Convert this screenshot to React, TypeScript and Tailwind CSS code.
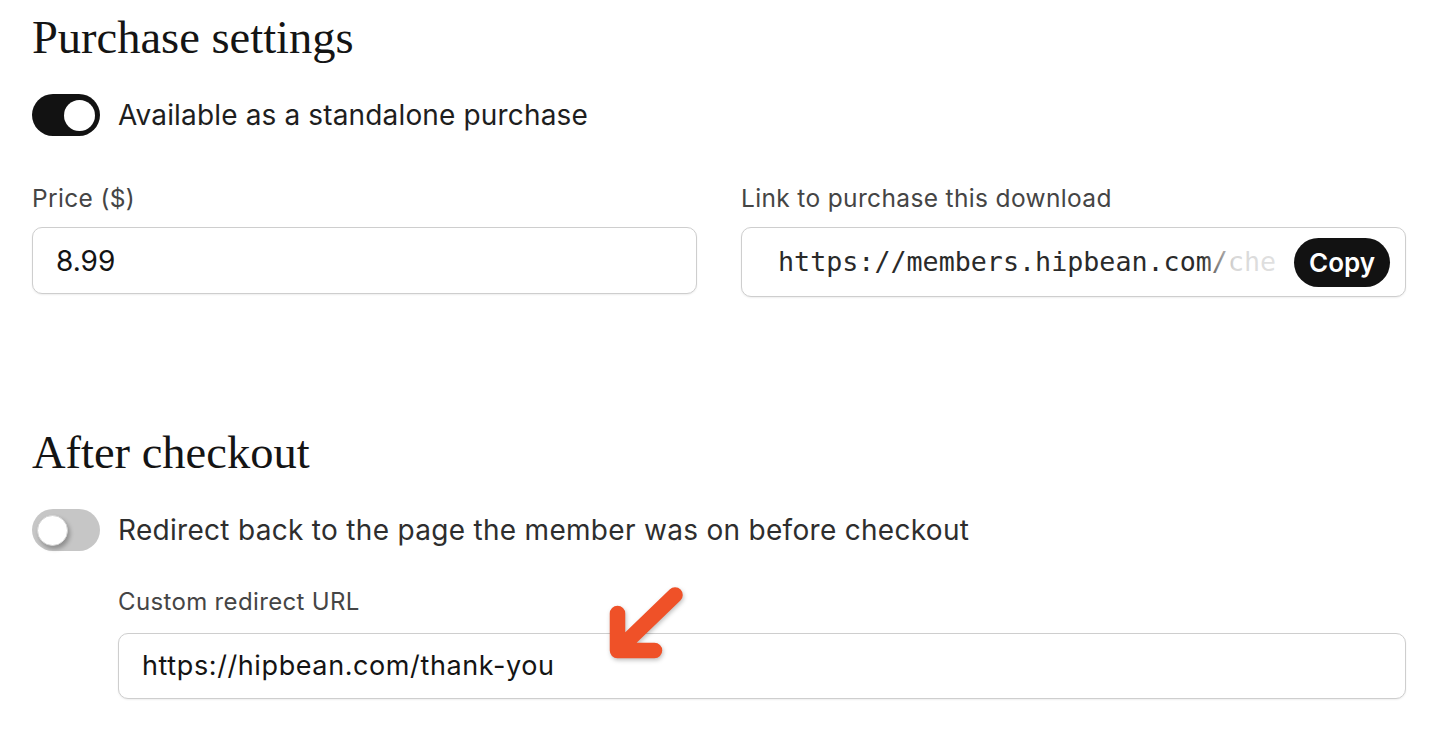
import { useState } from "react";

const sans = "font-['Inter','Noto_Sans',sans-serif]";
const serif = "font-['Liberation_Serif','Times_New_Roman',serif]";
const mono = "font-['DejaVu_Sans_Mono','Liberation_Mono',monospace]";

function Toggle({ on, onChange }: { on: boolean; onChange: () => void }) {
  return (
    <button
      type="button"
      onClick={onChange}
      className={`relative flex h-[42px] w-[68px] shrink-0 items-center rounded-full px-[5px] ${
        on ? "justify-end bg-[#121212]" : "justify-start bg-[#c6c6c6]"
      }`}
    >
      <span
        className={`block h-[31px] w-[31px] rounded-full bg-white ${
          on ? "" : "border border-[#d4d4d4] shadow-[2px_3px_4px_rgba(0,0,0,0.28)]"
        }`}
      />
    </button>
  );
}

export default function App() {
  const [standalone, setStandalone] = useState(true);
  const [redirectBack, setRedirectBack] = useState(false);

  return (
    <main className={`relative min-h-screen bg-white pl-8 pr-[34px] pt-[10px] ${sans}`}>
      {/* Purchase settings */}
      <h2 className={`${serif} text-[46.5px] leading-[56px] text-[#141414]`}>Purchase settings</h2>

      <div className="mt-[28px] flex items-center gap-[18px]">
        <Toggle on={standalone} onChange={() => setStandalone(!standalone)} />
        <span className="text-[28px] leading-[36px] tracking-[0.15px] text-[#1e1e1e]">
          Available as a standalone purchase
        </span>
      </div>

      <div className="mt-[46px] grid grid-cols-2 items-start gap-[44px]">
        <div>
          <label className="block text-[24.5px] leading-[32px] tracking-[0.35px] text-[#454545]">Price ($)</label>
          <div className="mt-[13px] flex h-[67px] items-center rounded-[10px] border border-[#cecece] bg-white pl-[23px] shadow-[0_1px_2px_rgba(0,0,0,0.07)]">
            <span className="text-[28px] text-[#141414]">8.99</span>
          </div>
        </div>
        <div>
          <label className="block text-[24.5px] leading-[32px] tracking-[0.35px] text-[#454545]">
            Link to purchase this download
          </label>
          <div className="mt-[13px] flex h-[70px] items-center gap-[15px] rounded-[10px] border border-[#cecece] bg-white pl-[36px] pr-[15px] shadow-[0_1px_2px_rgba(0,0,0,0.07)]">
            <div className="relative min-w-0 flex-1 overflow-hidden">
              <span className={`${mono} block whitespace-nowrap text-[26.7px] text-[#2a2a2a]`}>
                https://members.hipbean.com/che
              </span>
              <div className="absolute inset-y-0 right-0 w-[78px] bg-[linear-gradient(to_right,rgba(255,255,255,0)_0%,rgba(255,255,255,0.82)_42%,rgba(255,255,255,0.86)_100%)]" />
            </div>
            <button
              type="button"
              className="h-[49px] w-[96px] shrink-0 rounded-full bg-[#121212] text-[26px] font-semibold text-white"
            >
              Copy
            </button>
          </div>
        </div>
      </div>

      {/* After checkout */}
      <h2 className={`${serif} mt-[128px] text-[46.5px] leading-[56px] text-[#141414]`}>After checkout</h2>

      <div className="mt-[28px] flex items-center gap-[18px]">
        <Toggle on={redirectBack} onChange={() => setRedirectBack(!redirectBack)} />
        <span className="text-[28px] leading-[36px] tracking-[0.3px] text-[#2e2e2e]">
          Redirect back to the page the member was on before checkout
        </span>
      </div>

      <div className="ml-[86px] mt-[35px]">
        <label className="block text-[24px] leading-[32px] tracking-[0.35px] text-[#454545]">Custom redirect URL</label>
        <div className="mt-[15px] flex h-[66px] items-center rounded-[10px] border border-[#cecece] bg-white pl-[23px] shadow-[0_1px_2px_rgba(0,0,0,0.07)]">
          <span className="text-[27px] tracking-[0.6px] text-[#141414]">https://hipbean.com/thank-you</span>
        </div>
      </div>

      {/* callout arrow */}
      <svg
        className="pointer-events-none absolute left-[600px] top-[580px] h-[90px] w-[90px] drop-shadow-[1px_2px_2px_rgba(0,0,0,0.25)]"
        viewBox="0 0 90 90"
        fill="none"
      >
        <path
          d="M75 15 L17.5 70.5 M17.5 33.5 V70.5 H54.5"
          stroke="#EF5128"
          strokeWidth="15.5"
          strokeLinecap="round"
          strokeLinejoin="round"
        />
      </svg>
    </main>
  );
}
